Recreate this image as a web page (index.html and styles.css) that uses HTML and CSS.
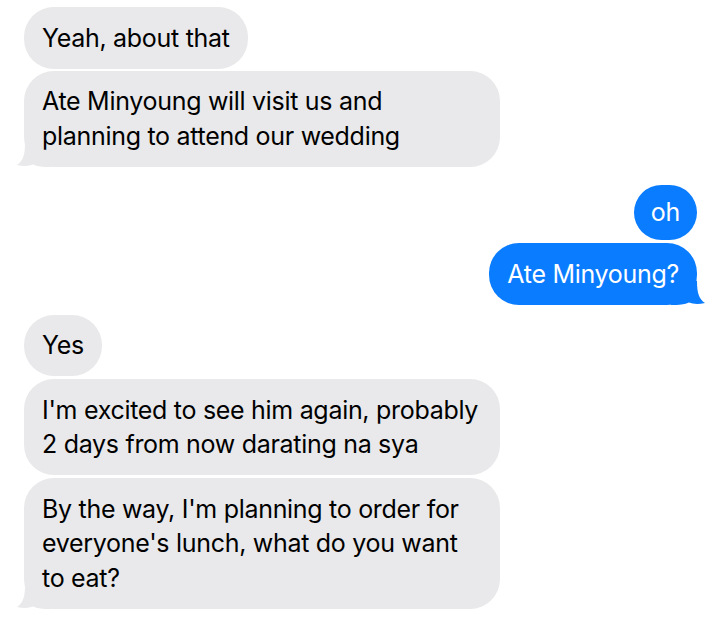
FILE: index.html
```html
<!DOCTYPE html>
<html lang="en">
<head>
    <meta charset="UTF-8">
    <meta name="viewport" content="width=device-width, initial-scale=1.0">
    <title>Messages</title>
    <link rel="stylesheet" href="styles.css">
</head>
<body>
    <div class="thread">
        <div class="group them first">
            <div class="bubble">Yeah, about that</div>
            <div class="bubble wide tail">Ate Minyoung will visit us and<br>planning to attend our wedding<svg class="tail-shape" viewBox="0 0 34 24"><path d="M8 0 C8 12 6 18 0 22 C7 23.5 12 23 16 21.5 C20 23.5 26 24 34 24 L34 0 Z"/></svg></div>
        </div>
        <div class="group me">
            <div class="bubble short">oh</div>
            <div class="bubble tail">Ate Minyoung?<svg class="tail-shape" viewBox="0 0 34 24"><path d="M8 0 C8 12 6 18 0 22 C7 23.5 12 23 16 21.5 C20 23.5 26 24 34 24 L34 0 Z"/></svg></div>
        </div>
        <div class="group them last">
            <div class="bubble">Yes</div>
            <div class="bubble wide">I'm excited to see him again, probably<br>2 days from now darating na sya</div>
            <div class="bubble wide tail">By the way, I'm planning to order for<br>everyone's lunch, what do you want<br>to eat?<svg class="tail-shape" viewBox="0 0 34 24"><path d="M8 0 C8 12 6 18 0 22 C7 23.5 12 23 16 21.5 C20 23.5 26 24 34 24 L34 0 Z"/></svg></div>
        </div>
    </div>
</body>
</html>
```

FILE: styles.css
```css
body {
    margin: 0;
    background: #ffffff;
    font-family: Inter, "Liberation Sans", Arial, sans-serif;
}
.thread {
    display: flex;
    flex-direction: column;
    padding: 7px 23px 0 24px;
}
.group {
    display: flex;
    flex-direction: column;
    gap: 3px;
}
.group.first {
    gap: 2px;
}
.group.me {
    align-items: flex-end;
    margin-top: 18px;
}
.group.them {
    align-items: flex-start;
}
.group.last {
    margin-top: 10px;
}
.bubble {
    position: relative;
    isolation: isolate;
    box-sizing: border-box;
    padding: 13.5px 18px;
    border-radius: 30px;
    font-size: 25px;
    line-height: 34.5px;
    letter-spacing: -0.3px;
}
.them .bubble {
    background: #e9e9eb;
    color: #000000;
}
.me .bubble {
    background: #0a7cff;
    color: #ffffff;
}
.bubble.wide {
    width: 476px;
}
.bubble.short {
    padding: 10.5px 17px;
}
.tail-shape {
    position: absolute;
    z-index: -1;
    bottom: 0;
    width: 34px;
    height: 24px;
}
.them .tail-shape {
    left: -7px;
    fill: #e9e9eb;
}
.me .tail-shape {
    right: -8px;
    fill: #0a7cff;
    transform: scaleX(-1);
}
```
